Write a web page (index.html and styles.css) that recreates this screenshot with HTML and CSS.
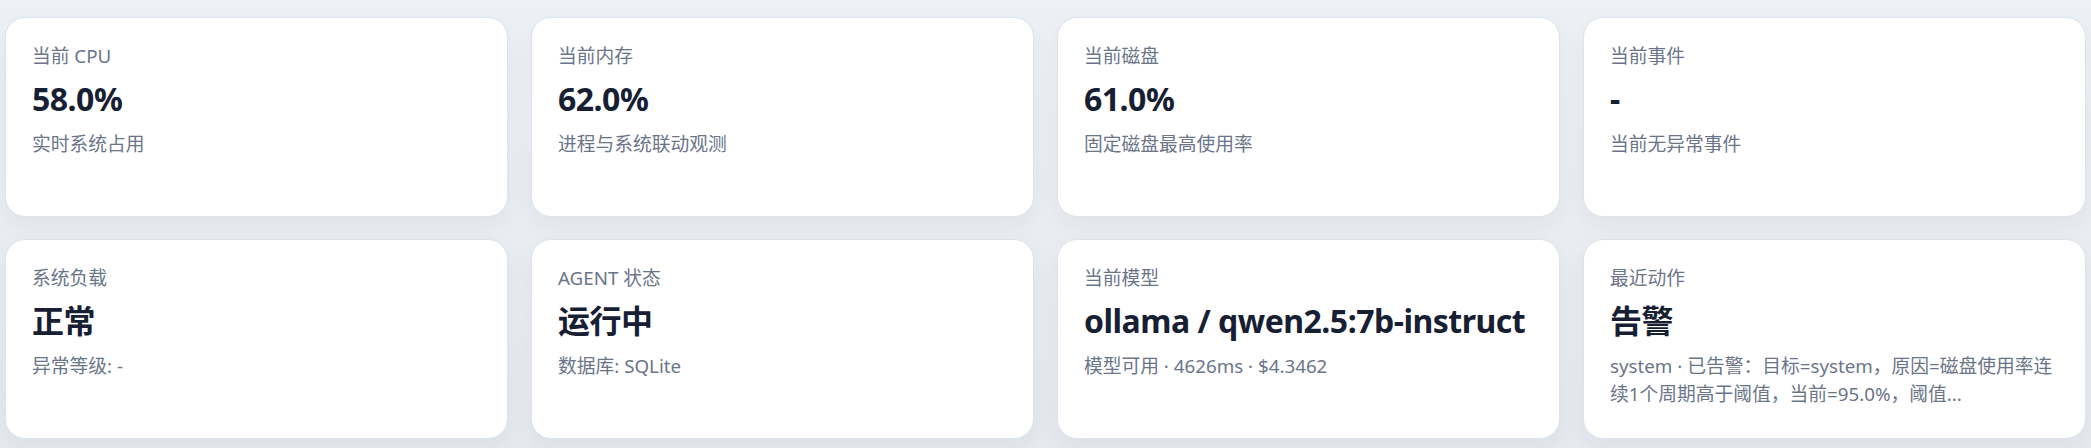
FILE: index.html
```html
<!DOCTYPE html>
<html lang="zh-CN">
<head>
<meta charset="utf-8">
<title>监控概览</title>
<link rel="stylesheet" href="styles.css">
</head>
<body>
<main class="grid">
  <section class="card">
    <div class="label">当前 CPU</div>
    <div class="value">58.0%</div>
    <div class="sub">实时系统占用</div>
  </section>
  <section class="card">
    <div class="label">当前内存</div>
    <div class="value">62.0%</div>
    <div class="sub">进程与系统联动观测</div>
  </section>
  <section class="card">
    <div class="label">当前磁盘</div>
    <div class="value">61.0%</div>
    <div class="sub">固定磁盘最高使用率</div>
  </section>
  <section class="card">
    <div class="label">当前事件</div>
    <div class="value">-</div>
    <div class="sub">当前无异常事件</div>
  </section>
  <section class="card">
    <div class="label">系统负载</div>
    <div class="value">正常</div>
    <div class="sub">异常等级: -</div>
  </section>
  <section class="card">
    <div class="label">AGENT 状态</div>
    <div class="value">运行中</div>
    <div class="sub">数据库: SQLite</div>
  </section>
  <section class="card">
    <div class="label">当前模型</div>
    <div class="value">ollama / qwen2.5:7b-instruct</div>
    <div class="sub">模型可用 · 4626ms · $4.3462</div>
  </section>
  <section class="card">
    <div class="label">最近动作</div>
    <div class="value">告警</div>
    <div class="sub clamp">system · 已告警：目标=system，原因=磁盘使用率连续1个周期高于阈值，当前=95.0%，阈值...</div>
  </section>
</main>
</body>
</html>
```
FILE: styles.css
```css
* { box-sizing: border-box; }

html, body {
  margin: 0;
  padding: 0;
}

body {
  width: 2091px;
  height: 448px;
  overflow: hidden;
  background: linear-gradient(180deg, #edf0f4 0%, #e6eaef 100%);
  font-family: "Noto Sans", "Noto Sans CJK SC", sans-serif;
  color: #172033;
}

.grid {
  display: grid;
  grid-template-columns: repeat(4, minmax(0, 1fr));
  gap: 22px 23px;
  padding: 17px 5px 0 5px;
}

.card {
  min-width: 0;
  min-height: 200px;
  background: #ffffff;
  border: 1px solid #dce3ec;
  border-radius: 20px;
  padding: 24px 28px 24px 26px;
  box-shadow: 0 8px 24px rgba(30, 41, 59, 0.05);
  display: flex;
  flex-direction: column;
}

.label {
  font-size: 18.75px;
  line-height: 28px;
  color: #6b7589;
  margin-bottom: 9px;
}

.value {
  font-size: 32px;
  line-height: 40px;
  font-weight: 700;
  color: #172033;
  margin-bottom: 11px;
  white-space: nowrap;
  letter-spacing: -0.5px;
}

.sub {
  font-size: 18.75px;
  line-height: 28px;
  color: #6b7589;
}

.clamp {
  display: -webkit-box;
  -webkit-line-clamp: 2;
  -webkit-box-orient: vertical;
  overflow: hidden;
}
```
